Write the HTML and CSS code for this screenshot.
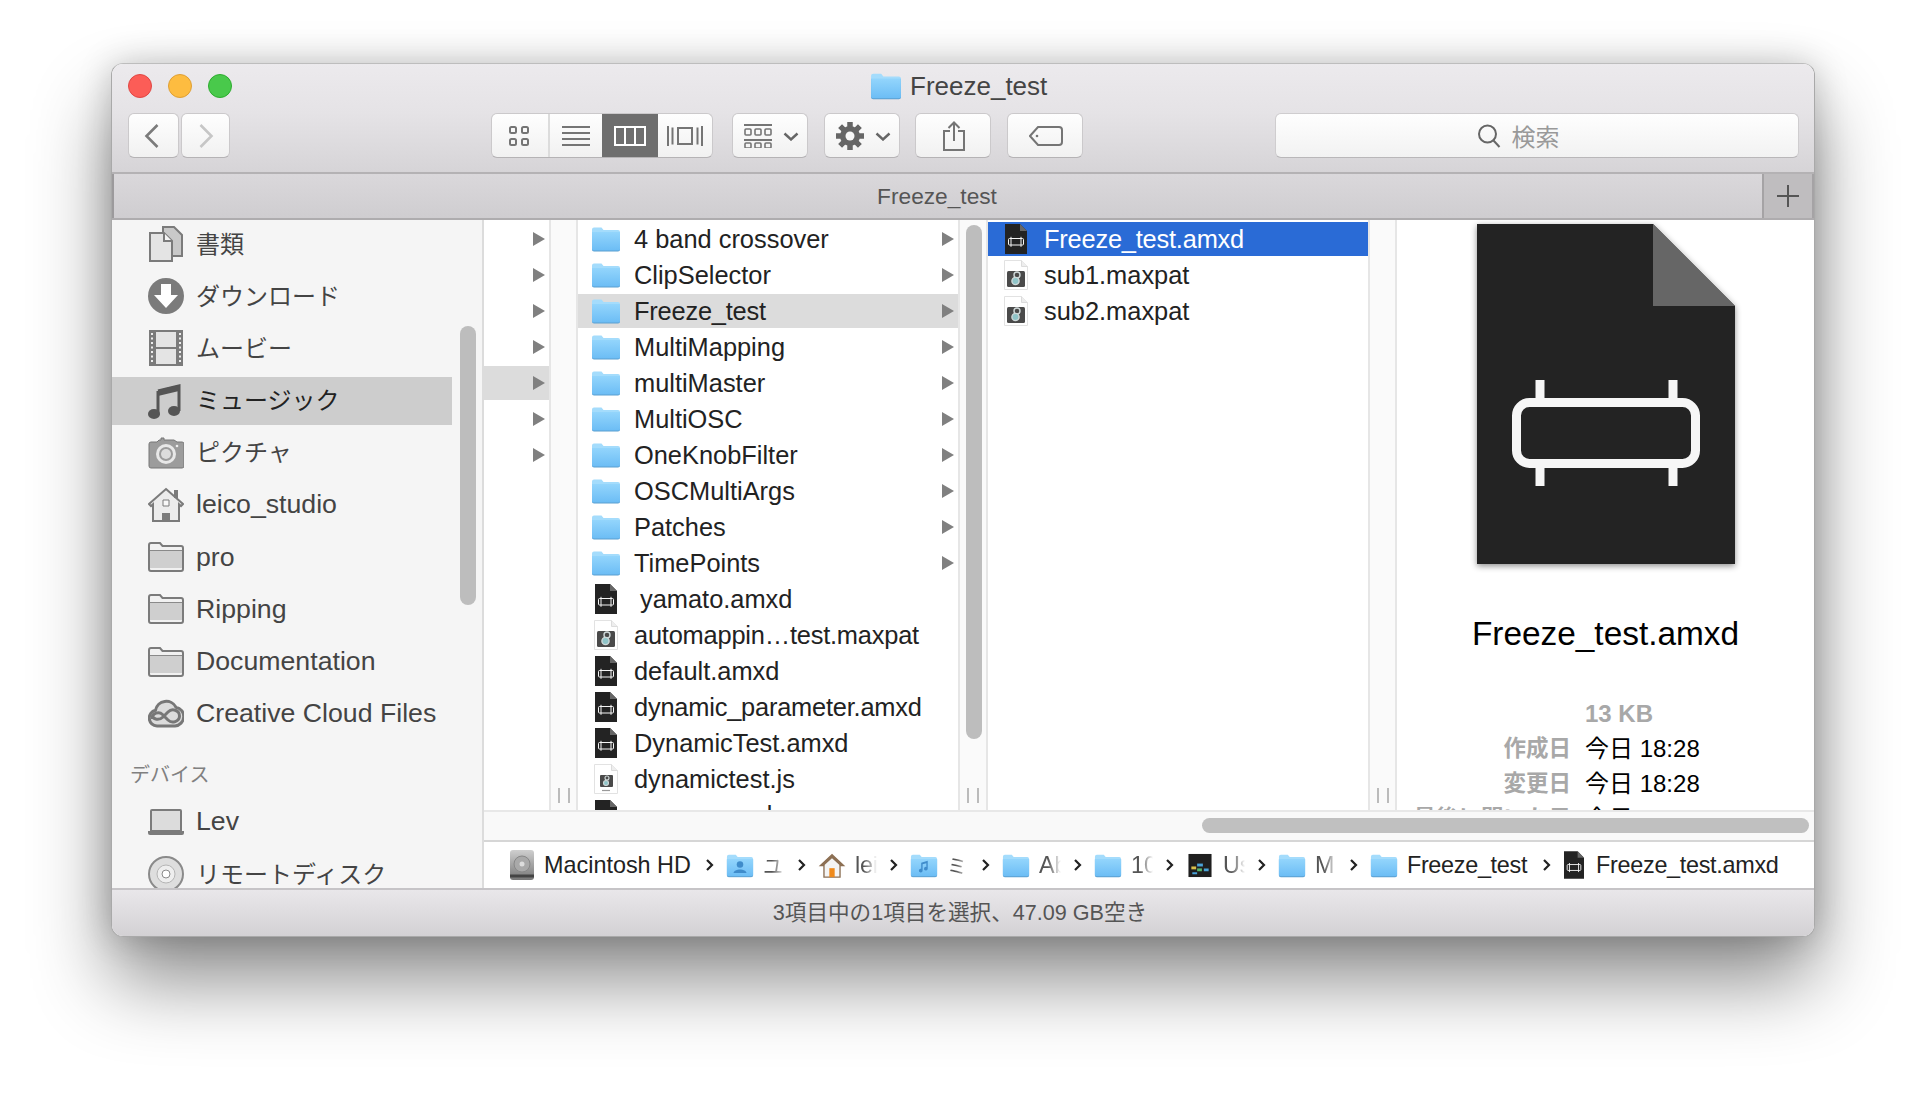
FILE: index.html
```html
<!DOCTYPE html>
<html>
<head>
  <meta charset="utf-8">
  <title>Freeze_test</title>
  <link rel="stylesheet" href="styles.css">
</head>
<body>
  <!-- shared icons -->
  <svg class="sprite" aria-hidden="true">
    <defs>
      <linearGradient id="blue-grad" x1="0" y1="0" x2="0" y2="1">
        <stop offset="0" stop-color="#93d5fc"/>
        <stop offset="1" stop-color="#6cbdf5"/>
      </linearGradient>
      <linearGradient id="disk-grad" x1="0" y1="0" x2="0" y2="1">
        <stop offset="0" stop-color="#cfcfcf"/>
        <stop offset="1" stop-color="#777"/>
      </linearGradient>
      <symbol id="folder-blue" viewBox="0 0 30 26">
        <path d="M1 3.500a2 2 0 0 1 2-2h7.500l2 2.500H27a2 2 0 0 1 2 2V23a2 2 0 0 1-2 2H3a2 2 0 0 1-2-2z" fill="#a4dcfc"/>
        <path d="M1 6.500h28V23.500a2 2 0 0 1-2 2H3a2 2 0 0 1-2-2z" fill="#5b9fd0"/>
        <path d="M1 6h28v17a1.500 1.500 0 0 1-1.500 1.500h-25A1.500 1.500 0 0 1 1 23z" fill="url(#blue-grad)"/>
      </symbol>
      <symbol id="folder-grey" viewBox="0 0 36 30">
        <path d="M1 3a2 2 0 0 1 2-2h9l2.500 3H33a2 2 0 0 1 2 2v21a2 2 0 0 1-2 2H3a2 2 0 0 1-2-2z" fill="#f1f1f1" stroke="#7b7b7b" stroke-width="2"/>
        <path d="M2 9h32v17H2z" fill="#cfcfcf"/>
        <path d="M2 8.500h32" stroke="#8a8a8a" stroke-width="1"/>
      </symbol>
      <symbol id="amxd-small" viewBox="0 0 22 30">
        <path d="M0 0h15l7 7v23H0z" fill="#232323"/>
        <path d="M15 0l7 7h-7z" fill="#666"/>
        <rect x="3.500" y="14.500" width="15" height="6.500" rx="1" fill="none" stroke="#f5f5f5" stroke-width="1"/>
        <path d="M6 12.800v10M16 12.800v10" stroke="#f5f5f5" stroke-width="1"/>
      </symbol>
      <symbol id="maxpat" viewBox="0 0 24 30">
        <path d="M.5.500h17l6 6v23H.5z" fill="#fff" stroke="#e2e2e2"/>
        <path d="M17.500.5v6h6" fill="#eee" stroke="#dcdcdc"/>
        <rect x="3" y="11" width="18" height="16" rx="1.500" fill="#4a4a4a"/>
        <circle cx="13" cy="15" r="3" fill="none" stroke="#cfd8d8" stroke-width="1.400"/>
        <circle cx="11.500" cy="21" r="3.600" fill="#8fc4c8" stroke="#cfd8d8" stroke-width="1.400"/>
      </symbol>
      <symbol id="jsfile" viewBox="0 0 24 30">
        <path d="M.5.500h17l6 6v23H.5z" fill="#fff" stroke="#e2e2e2"/>
        <path d="M17.500.5v6h6" fill="#eee" stroke="#dcdcdc"/>
        <rect x="6" y="11" width="13" height="12" rx="1" fill="#4a4a4a"/>
        <circle cx="13" cy="14" r="2" fill="none" stroke="#cfd8d8" stroke-width="1.100"/>
        <circle cx="12" cy="19" r="2.500" fill="#8fc4c8" stroke="#cfd8d8" stroke-width="1.100"/>
        <path d="M8 26.500h8" stroke="#999" stroke-width="1.200"/>
      </symbol>
      <symbol id="chevron" viewBox="0 0 9 14">
        <path d="M2 2l5 5-5 5" fill="none" stroke="#222" stroke-width="2.200"/>
      </symbol>
      <symbol id="drop" viewBox="0 0 16 9">
        <path d="M1.500 1.500L8 7.500l6.500-6" fill="none" stroke="#666" stroke-width="2.400"/>
      </symbol>
    </defs>
  </svg>

  <div class="window">
    <div class="titlebar">
      <div class="traffic">
        <span class="light light-red"></span>
        <span class="light light-yellow"></span>
        <span class="light light-green"></span>
      </div>
      <div class="window-title">
        <svg class="title-folder"><use href="#folder-blue"/></svg>
        <span>Freeze_test</span>
      </div>
    </div>

    <div class="toolbar">
      <div class="nav-buttons">
        <button class="tb-btn nav-btn nav-back" type="button">
          <svg width="16" height="26" viewBox="0 0 16 26"><path d="M13.500 2L2.500 13l11 11" fill="none" stroke="#7b7b7b" stroke-width="2.600"/></svg>
        </button>
        <button class="tb-btn nav-btn nav-fwd" type="button">
          <svg width="16" height="26" viewBox="0 0 16 26"><path d="M2.500 2l11 11-11 11" fill="none" stroke="#c6c6c6" stroke-width="2.600"/></svg>
        </button>
      </div>

      <div class="view-group">
        <div class="view-btn view-icons">
          <svg width="22" height="22" viewBox="0 0 22 22"><g fill="none" stroke="#757575" stroke-width="2"><rect x="2" y="2" width="6" height="6" rx="1.500"/><rect x="14" y="2" width="6" height="6" rx="1.500"/><rect x="2" y="14" width="6" height="6" rx="1.500"/><rect x="14" y="14" width="6" height="6" rx="1.500"/></g></svg>
        </div>
        <div class="view-btn view-list">
          <svg width="28" height="20" viewBox="0 0 28 20"><path d="M0 1h28M0 7h28M0 13h28M0 19h28" stroke="#757575" stroke-width="2"/></svg>
        </div>
        <div class="view-btn view-cols">
          <svg width="32" height="20" viewBox="0 0 32 20"><path d="M1 1h30v18H1zM11 1v18M21 1v18" fill="none" stroke="#fff" stroke-width="2"/></svg>
        </div>
        <div class="view-btn view-flow">
          <svg width="36" height="22" viewBox="0 0 36 22"><path d="M11 3h14v16H11z" fill="none" stroke="#757575" stroke-width="2"/><path d="M1 1v20M5.500 2.500v17M35 1v20M30.500 2.500v17" stroke="#757575" stroke-width="2"/></svg>
        </div>
      </div>

      <button class="tb-btn tool-btn tool-group" type="button">
        <svg width="28" height="24" viewBox="0 0 28 24"><path d="M0 1h28M0 16h28" stroke="#757575" stroke-width="2"/><g fill="none" stroke="#757575" stroke-width="1.600"><rect x="1" y="5" width="6" height="6" rx="1"/><rect x="11" y="5" width="6" height="6" rx="1"/><rect x="21" y="5" width="6" height="6" rx="1"/><rect x="1" y="19" width="6" height="5" rx="1"/><rect x="11" y="19" width="6" height="5" rx="1"/><rect x="21" y="19" width="6" height="5" rx="1"/></g></svg>
        <svg class="drop"><use href="#drop"/></svg>
      </button>
      <button class="tb-btn tool-btn tool-gear" type="button">
        <svg width="28" height="28" viewBox="0 0 28 28"><g stroke="#666" stroke-width="5.500"><path d="M14 0v28M0 14h28M4.100 4.100l19.800 19.800M23.900 4.100L4.100 23.900"/></g><circle cx="14" cy="14" r="10" fill="#666"/><circle cx="14" cy="14" r="4.500" fill="#f7f7f7"/></svg>
        <svg class="drop"><use href="#drop"/></svg>
      </button>
      <button class="tb-btn tool-btn tool-share" type="button">
        <svg width="24" height="30" viewBox="0 0 24 30"><path d="M8 10H2v19h20V10h-6M12 20V2M6.500 7L12 1.500 17.500 7" fill="none" stroke="#757575" stroke-width="2"/></svg>
      </button>
      <button class="tb-btn tool-btn tool-tag" type="button">
        <svg width="34" height="20" viewBox="0 0 34 20"><path d="M9 1h21a3 3 0 0 1 3 3v12a3 3 0 0 1-3 3H9l-8-9z" fill="none" stroke="#757575" stroke-width="2"/><circle cx="8" cy="10" r="1.300" fill="#757575"/></svg>
      </button>

      <div class="search">
        <svg width="25" height="24" viewBox="0 0 25 24"><circle cx="10.500" cy="10" r="8.500" fill="none" stroke="#666" stroke-width="2"/><path d="M16.500 16.500l6 6.500" stroke="#666" stroke-width="2"/></svg>
        <span>検索</span>
      </div>
    </div>

    <div class="tabbar">
      <div class="tab-title">Freeze_test</div>
      <div class="tab-add">
        <svg width="22" height="22" viewBox="0 0 22 22"><path d="M11 0v22M0 11h22" stroke="#555" stroke-width="2"/></svg>
      </div>
    </div>

    <div class="main">
      <aside class="sidebar">
        <div class="side-row">
          <svg class="side-icon" viewBox="0 0 36 36"><path d="M15 1h11l8 8v21H15z" fill="#c9c9c9" stroke="#7b7b7b" stroke-width="2"/><path d="M2 7h14l8 8v20H2z" fill="#e4e4e4" stroke="#7b7b7b" stroke-width="2"/><path d="M16 7v8h8" fill="#f4f4f4" stroke="#7b7b7b" stroke-width="2"/></svg>
          <span class="side-cjk">書類</span>
        </div>
        <div class="side-row">
          <svg class="side-icon" viewBox="0 0 36 36"><circle cx="18" cy="18" r="18" fill="#7b7b7b"/><path d="M13 6h10v11h7L18 30 6 17h7z" fill="#fff"/></svg>
          <span class="side-cjk">ダウンロード</span>
        </div>
        <div class="side-row">
          <svg class="side-icon" viewBox="0 0 36 36"><path d="M2 1h32v34H2z" fill="#e4e4e4" stroke="#7b7b7b" stroke-width="2"/><path d="M7 1v34M29 1v34M7 18h22" stroke="#7b7b7b" stroke-width="2"/><path d="M1 1h6v34H1zM29 1h6v34h-6z" fill="#7b7b7b"/><path d="M4 3v31M32 3v31" stroke="#eee" stroke-width="2" stroke-dasharray="2 2.500"/></svg>
          <span class="side-cjk">ムービー</span>
        </div>
        <div class="side-row side-selected">
          <svg class="side-icon" viewBox="0 0 36 36"><path d="M10 8L31 3v25" fill="none" stroke="#555" stroke-width="3"/><path d="M10 8v24" stroke="#555" stroke-width="3"/><path d="M10 7l21-5v6l-21 5z" fill="#555"/><ellipse cx="6" cy="31" rx="6" ry="5" fill="#555"/><ellipse cx="26" cy="28" rx="6" ry="5" fill="#555"/></svg>
          <span class="side-cjk">ミュージック</span>
        </div>
        <div class="side-row">
          <svg class="side-icon" viewBox="0 0 36 36"><path d="M1 9a2 2 0 0 1 2-2h6l2-2h2V3h3v2h10l3 2h5a2 2 0 0 1 2 2v22a2 2 0 0 1-2 2H3a2 2 0 0 1-2-2z" fill="#9c9c9c" stroke="#777" stroke-width="1"/><circle cx="18" cy="19" r="10" fill="#e8e8e8"/><circle cx="18" cy="19" r="7" fill="#9c9c9c"/><circle cx="18" cy="19" r="5" fill="#dcdcdc"/><circle cx="29" cy="11" r="1.300" fill="#eee"/></svg>
          <span class="side-cjk">ピクチャ</span>
        </div>
        <div class="side-row">
          <svg class="side-icon" viewBox="0 0 36 36"><path d="M18 2l17 15-2 2-2-1.800V34H5V17.200L3 19l-2-2z" fill="#ececec" stroke="#7b7b7b" stroke-width="2"/><path d="M26 3h4v8h-4z" fill="#7b7b7b"/><path d="M15 13h6v6h-6z" fill="#f8f8f8" stroke="#7b7b7b"/><path d="M14 26h8v8h-8z" fill="#7b7b7b"/></svg>
          <span>leico_studio</span>
        </div>
        <div class="side-row">
          <svg class="side-icon"><use href="#folder-grey"/></svg>
          <span>pro</span>
        </div>
        <div class="side-row">
          <svg class="side-icon"><use href="#folder-grey"/></svg>
          <span>Ripping</span>
        </div>
        <div class="side-row">
          <svg class="side-icon"><use href="#folder-grey"/></svg>
          <span>Documentation</span>
        </div>
        <div class="side-row">
          <svg class="side-icon" viewBox="0 0 36 36"><path d="M9 30a8 8 0 0 1-1.500-15.800 11 11 0 0 1 20.500-3A9.500 9.500 0 0 1 27 30z" fill="#dcdcdc" stroke="#777" stroke-width="3"/><path d="M4 23c0-6 7-8 10.500-4.500l5.500 5.500c4 4 11.500 1.500 11.500-4 0-6-7.500-8-11.500-4l-5 5c-3.500 3.500-10.500 3-10.500-2" fill="none" stroke="#777" stroke-width="3"/></svg>
          <span>Creative Cloud Files</span>
        </div>
        <div class="side-head">デバイス</div>
        <div class="side-row">
          <svg class="side-icon" viewBox="0 0 36 36"><path d="M3 7a1 1 0 0 1 1-1h28a1 1 0 0 1 1 1v20H3z" fill="#dcdcdc" stroke="#7b7b7b" stroke-width="2"/><path d="M0 27h36v2a2 2 0 0 1-2 2H2a2 2 0 0 1-2-2z" fill="#7b7b7b"/></svg>
          <span>Lev</span>
        </div>
        <div class="side-row">
          <svg class="side-icon" viewBox="0 0 36 36"><circle cx="18" cy="18" r="17" fill="#dedede" stroke="#8a8a8a" stroke-width="2"/><circle cx="18" cy="18" r="9" fill="#eee" stroke="#b5b5b5"/><circle cx="18" cy="18" r="4" fill="#fff" stroke="#8a8a8a"/></svg>
          <span class="side-cjk">リモートディスク</span>
        </div>
        <div class="side-scroll"></div>
      </aside>

      <div class="pane">
        <div class="columns">
          <div class="col col-first">
            <div class="row"><i class="arrow"></i></div>
            <div class="row"><i class="arrow"></i></div>
            <div class="row"><i class="arrow"></i></div>
            <div class="row"><i class="arrow"></i></div>
            <div class="row row-open"><i class="arrow"></i></div>
            <div class="row"><i class="arrow"></i></div>
            <div class="row"><i class="arrow"></i></div>
          </div>
          <div class="resizer"><span class="grip"></span></div>

          <div class="col col-files">
            <div class="row"><svg class="ic-folder"><use href="#folder-blue"/></svg><span class="name">4 band crossover</span><i class="arrow"></i></div>
            <div class="row"><svg class="ic-folder"><use href="#folder-blue"/></svg><span class="name">ClipSelector</span><i class="arrow"></i></div>
            <div class="row row-open"><svg class="ic-folder"><use href="#folder-blue"/></svg><span class="name name-tight">Freeze_test</span><i class="arrow"></i></div>
            <div class="row"><svg class="ic-folder"><use href="#folder-blue"/></svg><span class="name">MultiMapping</span><i class="arrow"></i></div>
            <div class="row"><svg class="ic-folder"><use href="#folder-blue"/></svg><span class="name">multiMaster</span><i class="arrow"></i></div>
            <div class="row"><svg class="ic-folder"><use href="#folder-blue"/></svg><span class="name">MultiOSC</span><i class="arrow"></i></div>
            <div class="row"><svg class="ic-folder"><use href="#folder-blue"/></svg><span class="name">OneKnobFilter</span><i class="arrow"></i></div>
            <div class="row"><svg class="ic-folder"><use href="#folder-blue"/></svg><span class="name">OSCMultiArgs</span><i class="arrow"></i></div>
            <div class="row"><svg class="ic-folder"><use href="#folder-blue"/></svg><span class="name">Patches</span><i class="arrow"></i></div>
            <div class="row"><svg class="ic-folder"><use href="#folder-blue"/></svg><span class="name">TimePoints</span><i class="arrow"></i></div>
            <div class="row"><svg class="ic-doc"><use href="#amxd-small"/></svg><span class="name name-pad">yamato.amxd</span></div>
            <div class="row"><svg class="ic-doc"><use href="#maxpat"/></svg><span class="name name-tight">automappin…test.maxpat</span></div>
            <div class="row"><svg class="ic-doc"><use href="#amxd-small"/></svg><span class="name">default.amxd</span></div>
            <div class="row"><svg class="ic-doc"><use href="#amxd-small"/></svg><span class="name name-tight">dynamic_parameter.amxd</span></div>
            <div class="row"><svg class="ic-doc"><use href="#amxd-small"/></svg><span class="name">DynamicTest.amxd</span></div>
            <div class="row"><svg class="ic-doc"><use href="#jsfile"/></svg><span class="name">dynamictest.js</span></div>
            <div class="row"><svg class="ic-doc"><use href="#amxd-small"/></svg><span class="name">mover.amxd</span></div>
          </div>
          <div class="resizer resizer-wide"><div class="col-scroll"></div><span class="grip"></span></div>

          <div class="col col-files">
            <div class="row row-selected"><svg class="ic-doc"><use href="#amxd-small"/></svg><span class="name name-tight">Freeze_test.amxd</span></div>
            <div class="row"><svg class="ic-doc"><use href="#maxpat"/></svg><span class="name">sub1.maxpat</span></div>
            <div class="row"><svg class="ic-doc"><use href="#maxpat"/></svg><span class="name">sub2.maxpat</span></div>
          </div>
          <div class="resizer"><span class="grip"></span></div>

          <div class="preview">
            <svg class="preview-icon" width="258" height="340" viewBox="0 0 258 340">
              <path d="M0 0h176l82 82v258H0z" fill="#232323"/>
              <path d="M176 0l82 82h-82z" fill="#666"/>
              <rect x="39.500" y="178.500" width="179" height="61" rx="13" fill="none" stroke="#f6f6f6" stroke-width="9"/>
              <path d="M63 156v18M196 156v18M63 244v18M196 244v18" stroke="#f6f6f6" stroke-width="9"/>
            </svg>
            <div class="preview-name">Freeze_test.amxd</div>
            <div class="meta">
              <span class="meta-label"></span><span class="meta-size">13 KB</span>
              <span class="meta-label">作成日</span><span class="meta-val">今日 18:28</span>
              <span class="meta-label">変更日</span><span class="meta-val">今日 18:28</span>
              <span class="meta-label">最後に開いた日</span><span class="meta-val">今日 18:28</span>
            </div>
          </div>
        </div>

        <div class="hscroll"><div class="hscroll-thumb"></div></div>

        <div class="pathbar">
          <svg class="crumb-ic crumb-disk" viewBox="0 0 26 32"><rect x="1" y="1" width="24" height="30" rx="3" fill="url(#disk-grad)"/><circle cx="13" cy="15" r="8" fill="#a9a9a9" stroke="#888"/><circle cx="13" cy="15" r="2.500" fill="#ddd"/><path d="M1 27h24" stroke="#444" stroke-width="3"/></svg>
          <span class="crumb-name crumb-first">Macintosh HD</span>
          <svg class="sep sep-first"><use href="#chevron"/></svg>

          <svg class="crumb-ic" viewBox="0 0 30 26"><use href="#folder-blue"/><circle cx="15" cy="12" r="3.500" fill="#3f8ccb"/><path d="M8 21c1-5 13-5 14 0z" fill="#3f8ccb"/></svg>
          <span class="crumb-name crumb-cut crumb-cjk">ユ</span>
          <svg class="sep"><use href="#chevron"/></svg>

          <svg class="crumb-ic" viewBox="0 0 30 28"><path d="M15 2L2 14h4v13h18V14h4z" fill="#f4f4f4" stroke="#8c6f53" stroke-width="1.500"/><path d="M15 2L2 14h4l9-8 9 8h4z" fill="#8c6f53"/><path d="M12 17h6v10h-6z" fill="#ef8a1c"/></svg>
          <span class="crumb-name crumb-cut">lei</span>
          <svg class="sep"><use href="#chevron"/></svg>

          <svg class="crumb-ic" viewBox="0 0 30 26"><use href="#folder-blue"/><path d="M12 10l7-2v8.500a2 2 0 1 1-1.500-2V10.500l-4 1.200v6.800a2 2 0 1 1-1.500-2z" fill="#3f8ccb"/></svg>
          <span class="crumb-name crumb-cut crumb-cjk">ミ</span>
          <svg class="sep"><use href="#chevron"/></svg>

          <svg class="crumb-ic"><use href="#folder-blue"/></svg>
          <span class="crumb-name crumb-cut">Ab</span>
          <svg class="sep"><use href="#chevron"/></svg>

          <svg class="crumb-ic"><use href="#folder-blue"/></svg>
          <span class="crumb-name crumb-cut">10</span>
          <svg class="sep"><use href="#chevron"/></svg>

          <svg class="crumb-ic" viewBox="0 0 26 26"><path d="M1 1h24v24H1z" fill="#1f1f1f"/><path d="M4 14h5v3H4z" fill="#d9c04a"/><path d="M10 11h6v3h-6z" fill="#4aa3d9"/><path d="M10 16h5v3h-5z" fill="#57b86b"/><path d="M17 16h5v3h-5zM5 20h5v2H5z" fill="#4aa3d9"/></svg>
          <span class="crumb-name crumb-cut">Us</span>
          <svg class="sep"><use href="#chevron"/></svg>

          <svg class="crumb-ic"><use href="#folder-blue"/></svg>
          <span class="crumb-name crumb-cut">M</span>
          <svg class="sep"><use href="#chevron"/></svg>

          <svg class="crumb-ic"><use href="#folder-blue"/></svg>
          <span class="crumb-name crumb-tight">Freeze_test</span>
          <svg class="sep sep-wide"><use href="#chevron"/></svg>

          <svg class="crumb-ic crumb-amxd"><use href="#amxd-small"/></svg>
          <span class="crumb-name crumb-tight">Freeze_test.amxd</span>
        </div>
      </div>
    </div>

    <div class="statusbar">3項目中の1項目を選択、47.09 GB空き</div>
  </div>
</body>
</html>
```

FILE: styles.css
```css
html, body {
  margin: 0;
  height: 100%;
}

body {
  box-sizing: border-box;
  height: 1096px;
  padding: 63px 0 0 111px;
  overflow: hidden;
  background-color: #fff;
  font-family: "Liberation Sans", "Noto Sans CJK JP", sans-serif;
  color: #222;
}

.sprite {
  display: block;
  width: 0;
  height: 0;
}

.window {
  display: flex;
  flex-direction: column;
  box-sizing: border-box;
  width: 1704px;
  height: 874px;
  overflow: hidden;
  border: 1px solid #a9a9a9;
  border-top-color: #bdbdbd;
  border-radius: 12px;
  background-color: #fff;
  box-shadow: 0 44px 78px rgba(0, 0, 0, 0.45), 0 0 34px rgba(0, 0, 0, 0.2);
}

/* title + toolbar share one gradient */
.titlebar {
  display: flex;
  align-items: center;
  box-sizing: border-box;
  height: 49px;
  padding-bottom: 5px;
  background: linear-gradient(#eceaed, #e5e3e6);
}

.traffic {
  display: flex;
  gap: 16px;
  padding-left: 16px;
}

.light {
  box-sizing: border-box;
  width: 24px;
  height: 24px;
  border-radius: 50%;
  border: 1px solid;
}

.light-red { background-color: #fc5d57; border-color: #df4744; }
.light-yellow { background-color: #fdbc40; border-color: #de9f34; }
.light-green { background-color: #49c94b; border-color: #2dac2f; }

.window-title {
  display: flex;
  align-items: center;
  gap: 8px;
  margin-left: 638px;
  font-size: 26px;
  color: #444;
}

.title-folder {
  width: 32px;
  height: 28px;
}

.toolbar {
  display: flex;
  align-items: stretch;
  height: 45px;
  padding: 0 15px 14px 16px;
  border-bottom: 2px solid #b4b2b4;
  background: linear-gradient(#e5e3e6, #d6d4d7);
}

.tb-btn {
  display: flex;
  align-items: center;
  justify-content: center;
  box-sizing: border-box;
  padding: 0;
  border: 1px solid #cbc9cb;
  border-bottom-color: #b5b3b5;
  border-radius: 6px;
  background: linear-gradient(#fefefe, #f1f1f1);
}

.nav-buttons {
  display: flex;
  gap: 2px;
}

.nav-back { width: 51px; padding-right: 4px; }
.nav-fwd { width: 49px; }

.view-group {
  display: flex;
  box-sizing: border-box;
  width: 222px;
  margin-left: 261px;
  overflow: hidden;
  border: 1px solid #cbc9cb;
  border-bottom-color: #b5b3b5;
  border-radius: 6px;
  background: linear-gradient(#fefefe, #f1f1f1);
}

.view-btn {
  display: flex;
  align-items: center;
  justify-content: center;
}

.view-icons { width: 58px; padding-right: 3px; box-sizing: border-box; border-right: 2px solid #dcdcdc; }
.view-list { width: 52px; padding-right: 1px; box-sizing: border-box; }
.view-cols { width: 56px; background-color: #6e6e6e; }
.view-flow { flex: 1; }

.tool-btn {
  width: 76px;
  margin-left: 16px;
  gap: 11px;
}

.tool-group { margin-left: 19px; padding-left: 2px; }
.tool-gear { padding-left: 2px; }
.tool-share { padding-left: 1px; margin-left: 15px; }
.tool-tag { padding-left: 1px; }

.drop {
  width: 16px;
  height: 9px;
  margin-top: 2px;
}

.search {
  display: flex;
  align-items: center;
  justify-content: center;
  gap: 10px;
  box-sizing: border-box;
  width: 524px;
  margin-left: auto;
  padding-right: 38px;
  border: 1px solid #cfcdcf;
  border-bottom-color: #b9b7b9;
  border-radius: 6px;
  background: linear-gradient(#fefefe, #f2f2f2);
  font-size: 24px;
  color: #999;
}

.tabbar {
  display: flex;
  height: 44px;
  border-bottom: 2px solid #aeacae;
  background: linear-gradient(#dad8db, #cfcdd0);
  box-shadow: inset 2px 0 0 #9c9a9c;
}

.tab-title {
  flex: 1;
  line-height: 44px;
  text-align: center;
  font-size: 22.700px;
  color: #555;
}

.tab-add {
  display: flex;
  align-items: center;
  justify-content: center;
  width: 52px;
  border-left: 2px solid #a5a3a5;
  border-right: 2px solid #a5a3a5;
  box-sizing: border-box;
  background-color: #bfbdbf;
}

.main {
  display: flex;
  height: 668px;
}

.sidebar {
  position: relative;
  display: flex;
  flex-direction: column;
  flex: none;
  gap: 4.2px;
  box-sizing: border-box;
  width: 372px;
  overflow: hidden;
  border-right: 2px solid #dcdcdc;
  background-color: #f5f5f5;
  font-size: 26.700px;
  color: #444;
}

.side-row {
  display: flex;
  flex: none;
  align-items: center;
  gap: 12px;
  width: 340px;
  height: 48px;
  padding-left: 36px;
  box-sizing: border-box;
}

.side-cjk {
  padding-bottom: 4px;
  font-size: 24px;
}

.side-selected {
  background-color: #cdcdcd;
  color: #222;
}

.side-icon {
  flex: none;
  width: 36px;
  height: 36px;
}

.side-head {
  flex: none;
  height: 30px;
  margin: 17.800px 0 4px 18px;
  line-height: 30px;
  font-size: 20px;
  color: #808080;
}

.side-scroll {
  position: absolute;
  top: 106px;
  left: 348px;
  width: 16px;
  height: 279px;
  border-radius: 8px;
  background-color: #bdbdbd;
}

.pane {
  display: flex;
  flex: 1;
  flex-direction: column;
  min-width: 0;
}

.columns {
  display: flex;
  height: 590px;
  overflow: hidden;
}

.col {
  display: flex;
  flex: none;
  flex-direction: column;
  gap: 2px;
  padding-top: 2px;
}

.col-first { width: 65px; }
.col-files { width: 380px; }

.row {
  display: flex;
  flex: none;
  align-items: center;
  height: 34px;
  font-size: 25.400px;
  white-space: nowrap;
}

.row-open { background-color: #dcdcdc; }

.row-selected {
  background-color: #2a6bd6;
  color: #fff;
}

.arrow {
  width: 0;
  height: 0;
  margin-left: auto;
  margin-right: 4px;
  border-left: 12px solid #808080;
  border-top: 7px solid transparent;
  border-bottom: 7px solid transparent;
}

.ic-folder {
  flex: none;
  width: 30px;
  height: 26px;
  margin-left: 13px;
  margin-right: 13px;
}

.ic-doc {
  flex: none;
  width: 24px;
  height: 30px;
  margin-left: 16px;
  margin-right: 16px;
}

.name-pad { padding-left: 6px; }
.name-tight { letter-spacing: -0.200px; }

.resizer {
  position: relative;
  display: flex;
  flex: none;
  align-items: flex-end;
  justify-content: center;
  box-sizing: border-box;
  width: 29px;
  padding-bottom: 7px;
  border-left: 2px solid #e6e6e6;
  border-right: 2px solid #e6e6e6;
  background-color: #fafafa;
}

.resizer-wide { width: 30px; }

.grip {
  width: 8px;
  height: 15px;
  border-left: 2px solid #bbb;
  border-right: 2px solid #bbb;
}

.col-scroll {
  position: absolute;
  top: 5px;
  left: 6px;
  width: 16px;
  height: 514px;
  border-radius: 8px;
  background-color: #bdbdbd;
}

.preview {
  display: flex;
  flex: 1;
  flex-direction: column;
  align-items: center;
  min-width: 0;
  padding-top: 4px;
  overflow: hidden;
}

.preview-icon {
  flex: none;
  filter: drop-shadow(0 2px 3px rgba(0, 0, 0, 0.45));
}

.preview-name {
  flex: none;
  margin-top: 50px;
  height: 40px;
  line-height: 40px;
  font-size: 33.400px;
  color: #000;
}

.meta {
  display: grid;
  grid-template-columns: 174px 1fr;
  grid-auto-rows: 35px;
  column-gap: 14px;
  align-self: stretch;
  margin-top: 42px;
  font-size: 24px;
  line-height: 35px;
  color: #000;
}

.meta-label {
  text-align: right;
  white-space: nowrap;
  font-size: 22.500px;
  color: #a8a8a8;
  font-weight: bold;
}

.meta-size {
  color: #a8a8a8;
  font-weight: bold;
}

.hscroll {
  display: flex;
  justify-content: flex-end;
  box-sizing: border-box;
  height: 30px;
  padding: 6px 5px 0 0;
  border-top: 2px solid #e8e8e8;
  background-color: #f9f9f9;
}

.hscroll-thumb {
  width: 607px;
  height: 15px;
  border-radius: 8px;
  background-color: #c0c0c0;
}

.pathbar {
  display: flex;
  align-items: center;
  box-sizing: border-box;
  height: 48px;
  padding-left: 25px;
  border-top: 2px solid #d6d6d6;
  background-color: #fff;
  font-size: 23.400px;
  color: #222;
  white-space: nowrap;
}

.crumb-ic {
  flex: none;
  width: 28px;
  height: 25px;
  margin-right: 9px;
}

.crumb-disk {
  width: 26px;
  height: 32px;
}

.crumb-amxd {
  width: 20px;
  height: 28px;
  margin-right: 12px;
}

.crumb-name {
  flex: none;
}

.crumb-tight { letter-spacing: -0.300px; }

.crumb-cut {
  width: 22px;
  overflow: hidden;
  color: #555;
  -webkit-mask-image: linear-gradient(90deg, #000 40%, transparent);
  mask-image: linear-gradient(90deg, #000 40%, transparent);
}

.crumb-cjk { font-size: 20px; }

.sep {
  flex: none;
  width: 9px;
  height: 14px;
  margin: 0 12px;
}

.sep-first { margin: 0 12px 0 14px; }
.sep-wide { margin: 0 13px 0 15px; }

.statusbar {
  flex: 1;
  padding-right: 6px;
  border-top: 2px solid #c6c4c7;
  background: linear-gradient(#e9e7ea, #d3d1d4);
  text-align: center;
  line-height: 46px;
  font-size: 21.600px;
  color: #555;
}
```
